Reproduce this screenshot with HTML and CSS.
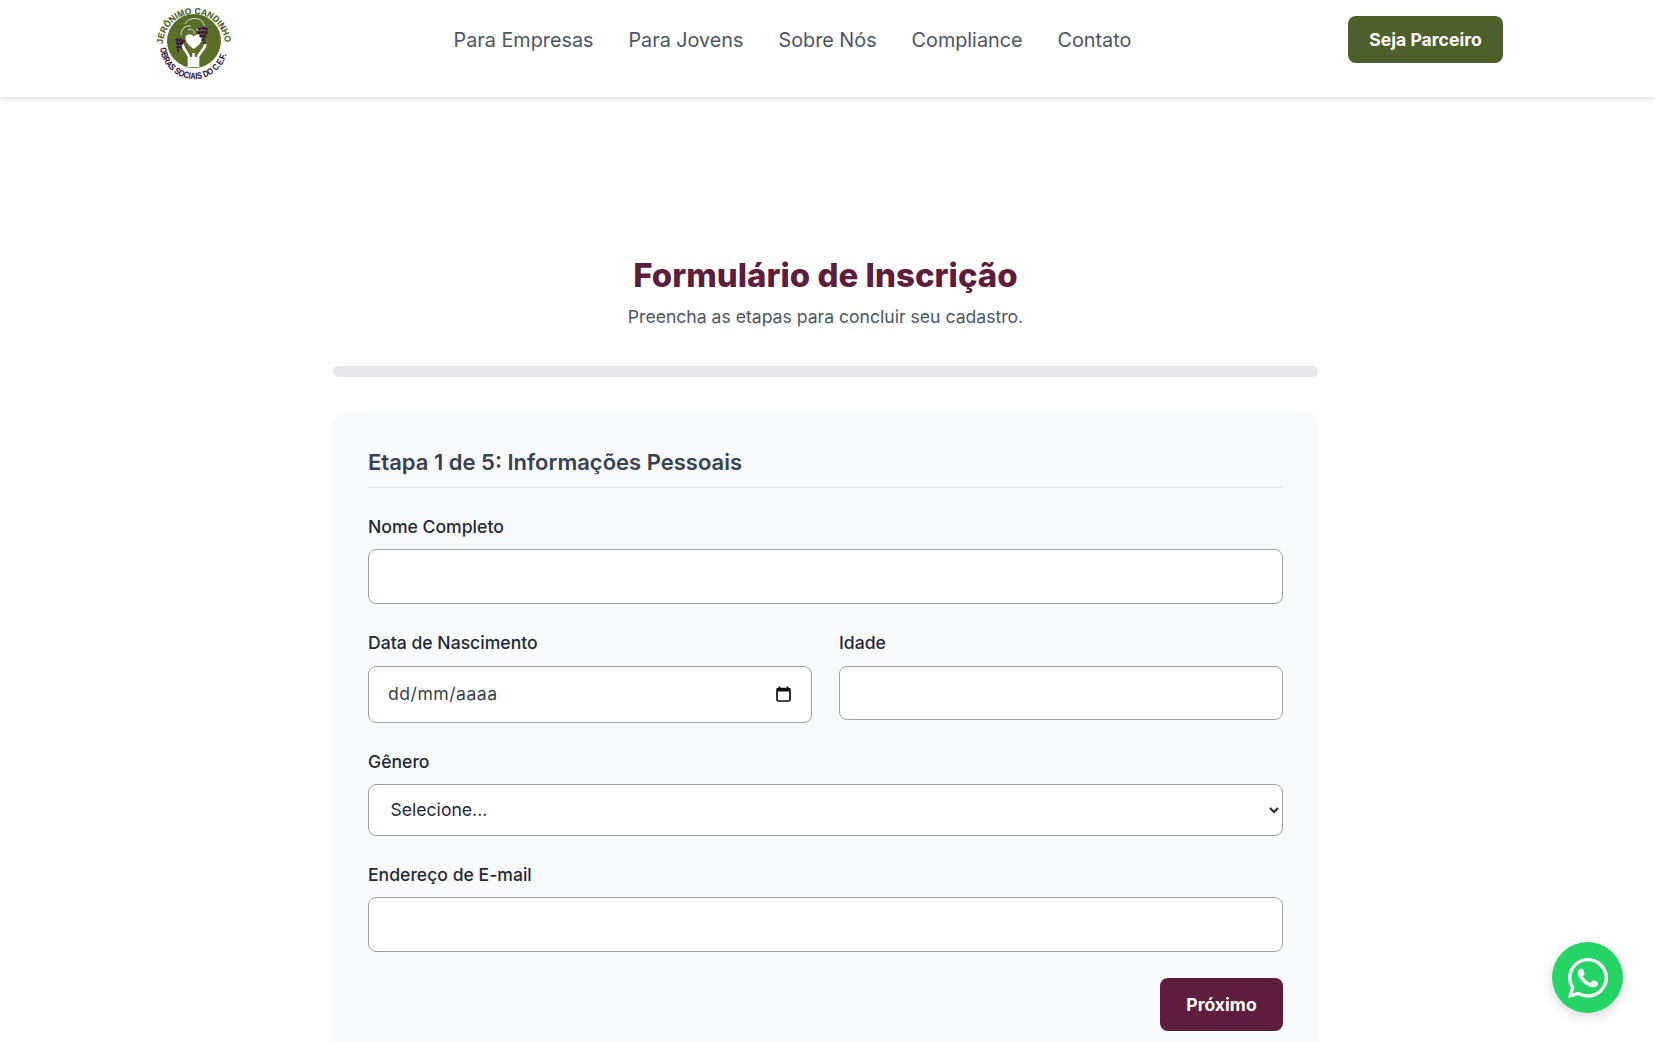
FILE: index.html
```html
<!DOCTYPE html>
<html lang="pt-BR">
<head>
<meta charset="utf-8">
<title>Formulário de Inscrição</title>
<link rel="stylesheet" href="styles.css">
</head>
<body>
<header class="site-header">
  <div class="header-inner">
    <a class="logo" href="#" aria-label="Jerônimo Candinho">
      <svg class="logo-svg" width="85" height="84" viewBox="0 1 85 84">
        <defs>
          <path id="arcTop" d="M11 48 A31 31 0 1 1 73 44"/>
          <path id="arcBottom" d="M8 46 A34 34 0 0 0 76 46"/>
        </defs>
        <circle cx="42" cy="42" r="27" fill="#5a6e2a"/>
        <text class="logo-top"><textPath href="#arcTop" startOffset="3" textLength="94" lengthAdjust="spacingAndGlyphs">JERÔNIMO CANDINHO</textPath></text>
        <text class="logo-bottom"><textPath href="#arcBottom" startOffset="3" textLength="94" lengthAdjust="spacingAndGlyphs">OBRAS SOCIAIS DO C.E.F.</textPath></text>
        <path d="M37 68 V58 C36 54 31 50 30.500 45 M46 68 V58 C47 54 53 50 53.500 45 M41.500 68 V54" fill="none" stroke="#fff" stroke-width="2.600"/>
        <path d="M37 58 H46 V68 H37 Z" fill="#fff"/>
        <path d="M41.800 50 C36 46 33.500 42.500 33.500 39 C33.500 35 39 34 41.800 37.500 C44.600 34 50 35 50 39 C50 42.500 47.500 46 41.800 50 Z" fill="#fff"/>
        <path d="M29 36 C29 30 33 26 39 27 M33 25 C36 18 50 17 52 26 C52.500 31 47 33 44 30 M36 31 C39 29 43 31 42 35" fill="none" stroke="#fff" stroke-width=".8"/>
        <g fill="#3a1748">
          <circle cx="48" cy="30" r="1.800"/><circle cx="51.500" cy="29" r="1.800"/><circle cx="54.500" cy="30" r="1.600"/><circle cx="47" cy="33.500" r="1.800"/><circle cx="50.500" cy="33" r="1.800"/><circle cx="54" cy="33.500" r="1.800"/><circle cx="49" cy="37" r="1.800"/><circle cx="52.500" cy="37" r="1.800"/><circle cx="51" cy="40.500" r="1.600"/><circle cx="52.500" cy="43.500" r="1.200"/>
          <circle cx="25" cy="41" r="1.700"/><circle cx="28.500" cy="41" r="1.700"/><circle cx="31.500" cy="42" r="1.500"/><circle cx="26" cy="44.500" r="1.700"/><circle cx="29.500" cy="44.500" r="1.700"/><circle cx="26" cy="48" r="1.600"/><circle cx="28.500" cy="48" r="1.500"/><circle cx="26" cy="51.500" r="1.300"/>
        </g>
      </svg>
    </a>
    <nav class="main-nav">
      <a href="#">Para Empresas</a>
      <a href="#">Para Jovens</a>
      <a href="#">Sobre Nós</a>
      <a href="#">Compliance</a>
      <a href="#">Contato</a>
    </nav>
    <a class="partner-btn" href="#">Seja Parceiro</a>
  </div>
</header>

<main class="page">
  <h1 class="page-title">Formulário de Inscrição</h1>
  <p class="page-sub">Preencha as etapas para concluir seu cadastro.</p>
  <div class="progress"></div>
  <form class="card">
    <h2 class="step-title">Etapa 1 de 5: Informações Pessoais</h2>
    <div class="field">
      <label class="label">Nome Completo</label>
      <input class="input" type="text">
    </div>
    <div class="field-row">
      <div class="field">
        <label class="label">Data de Nascimento</label>
        <div class="date-wrap">
          <input class="input input-date" type="text" value="dd/mm/aaaa">
          <svg class="cal-icon" width="15" height="16" viewBox="0 0 15 16"><path d="M3.500 0.500V3M11.500 0.500V3" stroke="#111" stroke-width="1.800" fill="none"/><rect x="1" y="2.500" width="13" height="12.500" rx="1.200" fill="none" stroke="#111" stroke-width="1.700"/><rect x="1" y="2.500" width="13" height="3" fill="#111"/></svg>
        </div>
      </div>
      <div class="field">
        <label class="label">Idade</label>
        <input class="input input-age" type="text">
      </div>
    </div>
    <div class="field">
      <label class="label">Gênero</label>
      <select class="input input-select"><option>Selecione...</option></select>
    </div>
    <div class="field">
      <label class="label">Endereço de E-mail</label>
      <input class="input" type="text">
    </div>
    <div class="actions">
      <button class="next-btn" type="button">Próximo</button>
    </div>
  </form>
</main>

<a class="whatsapp" href="#" aria-label="WhatsApp">
  <svg width="40" height="40" viewBox="0 32 448 448"><path fill="#fff" d="M380.900 97.100C339 55.100 283.200 32 223.900 32c-122.400 0-222 99.600-222 222 0 39.100 10.200 77.300 29.600 111L0 480l117.700-30.900c32.400 17.700 68.900 27 106.100 27h.1c122.300 0 224.100-99.600 224.100-222 0-59.300-25.200-115-67.100-157zm-157 341.600c-33.200 0-65.700-8.900-94-25.700l-6.700-4-69.800 18.300L72 359.200l-4.400-7c-18.500-29.400-28.200-63.300-28.200-98.200 0-101.700 82.800-184.500 184.600-184.500 49.300 0 95.600 19.200 130.400 54.100 34.800 34.900 56.200 81.200 56.100 130.500 0 101.800-84.900 184.600-186.600 184.600zm101.200-138.200c-5.500-2.800-32.800-16.200-37.900-18-5.100-1.900-8.800-2.800-12.500 2.800-3.700 5.600-14.300 18-17.600 21.800-3.200 3.700-6.500 4.200-12 1.400-32.600-16.300-54-29.100-75.500-66-5.700-9.800 5.700-9.100 16.300-30.300 1.800-3.700.9-6.900-.5-9.700-1.400-2.800-12.500-30.100-17.100-41.200-4.500-10.800-9.100-9.300-12.500-9.500-3.200-.2-6.900-.2-10.600-.2-3.700 0-9.700 1.400-14.800 6.900-5.100 5.600-19.400 19-19.400 46.300 0 27.300 19.900 53.700 22.600 57.400 2.800 3.700 39.100 59.700 94.800 83.800 35.200 15.200 49 16.500 66.600 13.900 10.700-1.600 32.800-13.400 37.400-26.400 4.600-13 4.600-24.100 3.200-26.400-1.300-2.500-5-3.900-10.500-6.600z"/></svg>
</a>
</body>
</html>
```
FILE: styles.css
```css
* { box-sizing: border-box; }
html, body { margin: 0; height: 100%; overflow: hidden; background: #fff; }
body { font-family: Inter, "Liberation Sans", sans-serif; color: #1f2937; padding-right: 4px; }
a { text-decoration: none; }

.site-header { height: 97px; margin-right: -4px; background: #fff; box-shadow: 0 2px 5px rgba(0,0,0,.12); position: relative; }
.header-inner { width: 1351px; margin-left: 152px; height: 78px; display: flex; align-items: center; justify-content: space-between; }
.logo { display: block; width: 85px; height: 84px; align-self: flex-start; }
.logo-svg { display: block; }
.logo-top { font: 700 8.800px "Liberation Sans", sans-serif; fill: #4c5f1e; stroke: #4c5f1e; stroke-width: .15px; }
.logo-bottom { font: 700 9px "Liberation Sans", sans-serif; fill: #2f0f40; stroke: #2f0f40; stroke-width: .1px; }
.main-nav { display: flex; gap: 35px; padding-top: 2px; }
.main-nav a { font-size: 19.800px; line-height: 28px; color: #4b5563; }
.partner-btn { display: block; width: 155px; height: 47px; line-height: 47px; text-align: center; background: #4f5f2c; color: #fff; font-size: 17.600px; font-weight: 700; border-radius: 8px; }

.page { width: 985px; margin: 0 auto; padding-top: 158px; }
.page-title { margin: 0 0 8px; text-align: center; font-size: 33px; line-height: 40px; font-weight: 800; color: #5c1e3c; }
.page-sub { margin: 0 0 35px; text-align: center; font-size: 17.600px; line-height: 28px; color: #4b5563; }
.progress { height: 11px; border-radius: 6px; background: #e5e7eb; margin-bottom: 35px; }
.card { padding: 35px; background: #f9fafb; border-radius: 12px; box-shadow: 0 1px 3px rgba(0,0,0,.04); }
.step-title { margin: 0 0 27px; padding-bottom: 10px; border-bottom: 1px solid #e5e7eb; font-size: 22px; line-height: 30px; font-weight: 600; color: #374151; }
.field { margin-bottom: 27px; }
.label { display: block; margin-bottom: 10px; font-size: 17.600px; line-height: 24px; font-weight: 500; color: #1f2937; }
.input { display: block; width: 100%; height: 55px; padding: 0 18px; border: 1px solid #9ca3af; border-radius: 8px; background: #fff; font-family: inherit; font-size: 17.600px; color: #374151; outline: none; }
.field-row { display: grid; grid-template-columns: 1fr 1fr; column-gap: 27px; }
.field-row .label { margin-bottom: 11px; }
.field-row .field { margin-bottom: 27px; }
.date-wrap { position: relative; }
.input-date { height: 57px; padding: 0 19px 2px; letter-spacing: .5px; }
.input-age { height: 54px; }
.cal-icon { position: absolute; right: 21px; top: 20px; }
.input-select { height: 52px; padding: 0 17.500px 2px; color: #1f2937; }
.actions { display: flex; justify-content: flex-end; margin-top: -1px; }
.next-btn { width: 123px; height: 53px; border: 0; border-radius: 8px; background: #5c1e3c; color: #fff; font-family: inherit; font-size: 17.600px; font-weight: 700; }

.whatsapp { position: fixed; right: 32px; bottom: 29px; width: 71px; height: 71px; border-radius: 50%; background: #25d366; display: flex; align-items: center; justify-content: center; box-shadow: 0 4px 12px rgba(0,0,0,.15); }
```
